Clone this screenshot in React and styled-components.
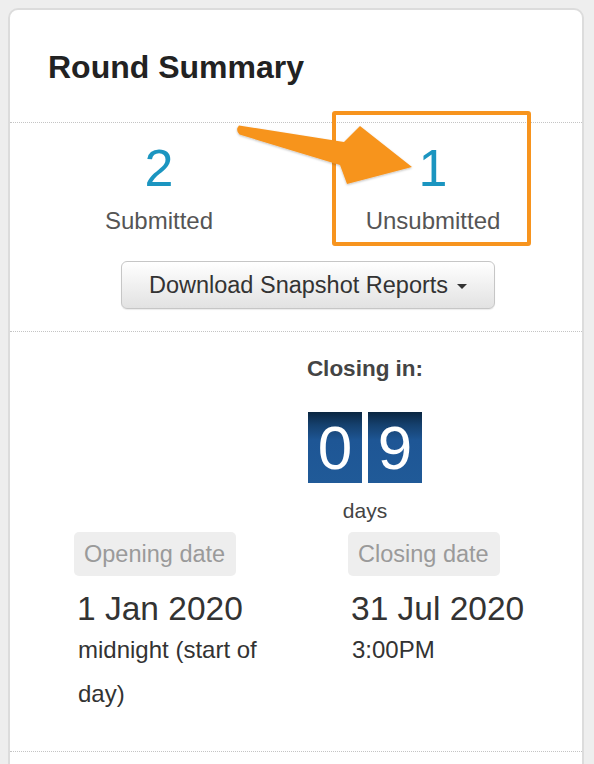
import React from "react";
import styled, { createGlobalStyle } from "styled-components";

const GlobalStyle = createGlobalStyle`
  html, body { margin: 0; padding: 0; background: #eeeeee; }
  body { font-family: "Liberation Sans", Arial, Helvetica, sans-serif; overflow: hidden; }
`;

const Page = styled.div`
  padding: 8px;
`;

const Card = styled.div`
  position: relative;
  width: 576px;
  box-sizing: border-box;
  background: #fff;
  border: 2px solid #dcdcdc;
  border-radius: 10px;
`;

const Header = styled.div`
  height: 112px;
  box-sizing: border-box;
  padding: 37px 38px 0;
`;

const Title = styled.h3`
  margin: 0;
  font-size: 32px;
  line-height: 40px;
  font-weight: 700;
  color: #222;
`;

const Section = styled.div`
  border-top: 1px dotted #c4c4c4;
`;

const StatsSection = styled(Section)`
  padding: 17px 12px 22px;
`;

const StatsRow = styled.div`
  display: grid;
  grid-template-columns: 1fr 1fr;
`;

const Stat = styled.div`
  text-align: center;
`;

const StatNumber = styled.div`
  font-size: 52px;
  line-height: 56px;
  color: #1b95c0;
  margin-bottom: 10px;
`;

const StatLabel = styled.div`
  font-size: 24px;
  line-height: 30px;
  color: #555;
`;

const ButtonRow = styled.div`
  display: flex;
  justify-content: center;
  padding-left: 24px;
  margin-top: 25px;
`;

const DropdownButton = styled.button`
  width: 374px;
  height: 48px;
  box-sizing: border-box;
  display: flex;
  align-items: center;
  justify-content: center;
  gap: 9px;
  font-family: inherit;
  font-size: 23.5px;
  color: #333;
  background: linear-gradient(to bottom, #ffffff 0%, #e2e2e2 100%);
  border: 1px solid #c6c6c6;
  border-radius: 6px;
  box-shadow: 0 1px 1px rgba(0, 0, 0, 0.08);
  padding: 0 12px;
  cursor: pointer;
`;

const Caret = styled.span`
  display: inline-block;
  width: 0;
  height: 0;
  border-top: 5px solid #333;
  border-left: 5.5px solid transparent;
  border-right: 5.5px solid transparent;
  margin-top: 2px;
`;

const ClosingSection = styled(Section)`
  padding: 22px 0 35px;
`;

const Countdown = styled.div`
  padding-left: 138px;
  display: flex;
  flex-direction: column;
  align-items: center;
`;

const ClosingTitle = styled.div`
  font-size: 22.5px;
  line-height: 30px;
  font-weight: 700;
  color: #444;
`;

const Digits = styled.div`
  display: flex;
  gap: 6px;
  margin-top: 28px;
`;

const Digit = styled.div`
  width: 54px;
  height: 71px;
  display: flex;
  align-items: center;
  justify-content: center;
  font-size: 62px;
  line-height: 1;
  color: #fff;
  background: linear-gradient(
    to bottom,
    #0a2641 0%,
    #15406d 18%,
    #1e5695 40%,
    #205a98 100%
  );
`;

const Unit = styled.div`
  font-size: 21px;
  line-height: 28px;
  color: #444;
  margin-top: 14px;
`;

const DatesGrid = styled.div`
  display: grid;
  grid-template-columns: 274px 274px;
  padding-left: 64px;
  margin-top: 7px;
`;

const DateBlock = styled.div`
  display: flex;
  flex-direction: column;
  align-items: flex-start;
`;

const DateLabel = styled.span`
  background: #eeeeee;
  color: #9a9a9a;
  font-size: 23.5px;
  line-height: 44px;
  padding: 0 11px 0 10px;
  border-radius: 5px;
`;

const DateValue = styled.div`
  font-size: 33.5px;
  line-height: 38px;
  color: #333;
  margin-top: 14px;
  padding-left: 3px;
`;

const DateTime = styled.div`
  font-size: 24px;
  line-height: 44px;
  color: #333;
  padding-left: 4px;
  max-width: 200px;
`;

const BottomSection = styled(Section)`
  height: 60px;
`;

const Highlight = styled.div`
  position: absolute;
  left: 322px;
  top: 101px;
  width: 199px;
  height: 135px;
  box-sizing: border-box;
  border: 4px solid #f7941e;
  border-radius: 3px;
  pointer-events: none;
`;

const ArrowLayer = styled.svg`
  position: absolute;
  left: 0;
  top: 0;
  overflow: visible;
  pointer-events: none;
`;

function Arrow() {
  return (
    <ArrowLayer width="420" height="190" viewBox="0 0 420 190">
      <defs>
        <filter id="arrowShadow" x="-10%" y="-20%" width="130%" height="150%">
          <feDropShadow dx="0" dy="1" stdDeviation="1.2" floodColor="#000" floodOpacity="0.25" />
        </filter>
      </defs>
      <path
        d="M229 115.5 L334 132 L350 116 L402 157 L337 174 L330 155 L229.5 124.5 Q225 120 229 115.5 Z"
        fill="#f7941e"
        filter="url(#arrowShadow)"
      />
    </ArrowLayer>
  );
}

export default function App() {
  return (
    <>
      <GlobalStyle />
      <Page>
        <Card>
          <Header>
            <Title>Round Summary</Title>
          </Header>
          <StatsSection>
            <StatsRow>
              <Stat>
                <StatNumber>2</StatNumber>
                <StatLabel>Submitted</StatLabel>
              </Stat>
              <Stat>
                <StatNumber>1</StatNumber>
                <StatLabel>Unsubmitted</StatLabel>
              </Stat>
            </StatsRow>
            <ButtonRow>
              <DropdownButton type="button">
                Download Snapshot Reports <Caret />
              </DropdownButton>
            </ButtonRow>
          </StatsSection>
          <ClosingSection>
            <Countdown>
              <ClosingTitle>Closing in:</ClosingTitle>
              <Digits>
                <Digit>0</Digit>
                <Digit>9</Digit>
              </Digits>
              <Unit>days</Unit>
            </Countdown>
            <DatesGrid>
              <DateBlock>
                <DateLabel>Opening date</DateLabel>
                <DateValue>1 Jan 2020</DateValue>
                <DateTime>midnight (start of day)</DateTime>
              </DateBlock>
              <DateBlock>
                <DateLabel>Closing date</DateLabel>
                <DateValue>31 Jul 2020</DateValue>
                <DateTime>3:00PM</DateTime>
              </DateBlock>
            </DatesGrid>
          </ClosingSection>
          <BottomSection />
          <Highlight />
          <Arrow />
        </Card>
      </Page>
    </>
  );
}
